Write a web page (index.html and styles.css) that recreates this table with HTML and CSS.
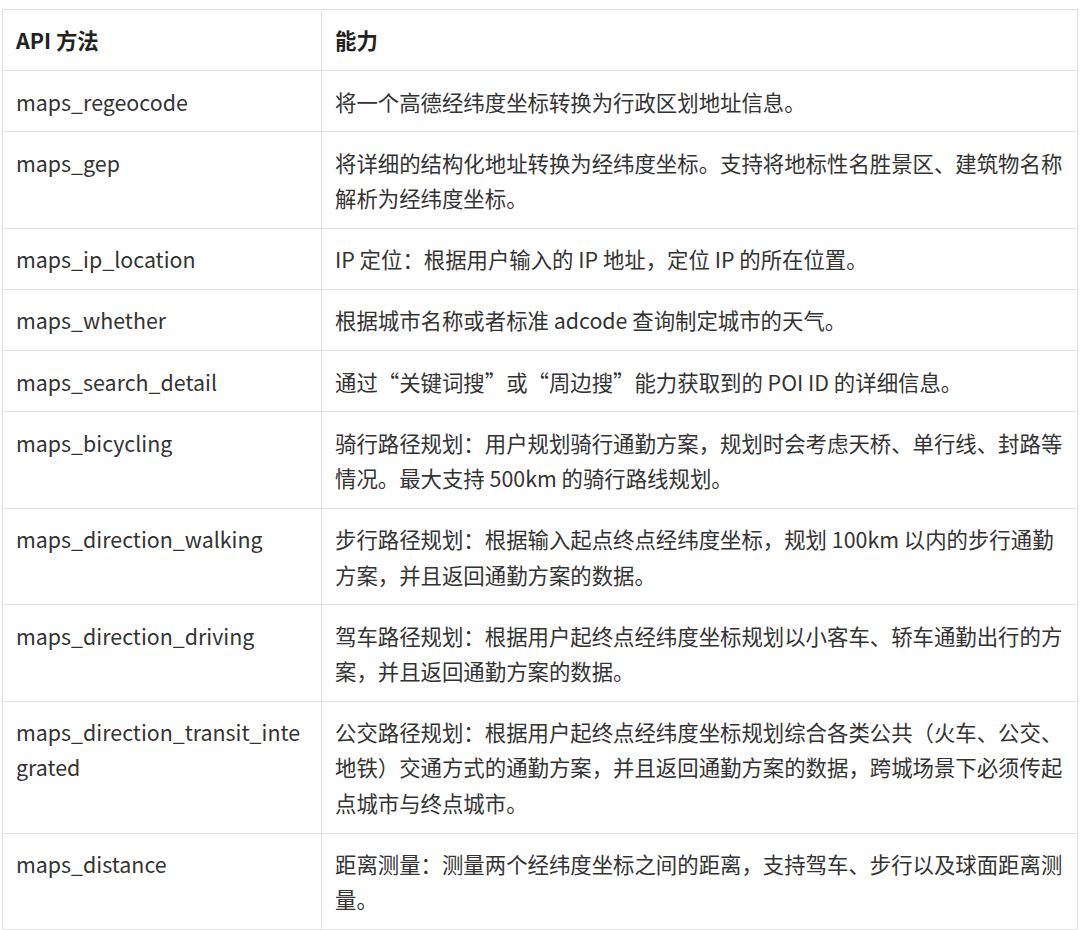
FILE: index.html
```html
<!DOCTYPE html>
<html lang="zh-CN">
<head>
<meta charset="utf-8">
<link rel="stylesheet" href="styles.css">
</head>
<body>
<table class="api-table">
  <colgroup><col class="col-name"><col class="col-desc"></colgroup>
  <thead>
    <tr><th>API 方法</th><th>能力</th></tr>
  </thead>
  <tbody>
    <tr><td>maps_regeocode</td><td>将一个高德经纬度坐标转换为行政区划地址信息。</td></tr>
    <tr><td>maps_gep</td><td>将详细的结构化地址转换为经纬度坐标。支持将地标性名胜景区、建筑物名称解析为经纬度坐标。</td></tr>
    <tr><td>maps_ip_location</td><td>IP 定位：根据用户输入的 IP 地址，定位 IP 的所在位置。</td></tr>
    <tr><td>maps_whether</td><td>根据城市名称或者标准 adcode 查询制定城市的天气。</td></tr>
    <tr><td>maps_search_detail</td><td>通过“关键词搜”或“周边搜”能力获取到的 POI ID 的详细信息。</td></tr>
    <tr><td>maps_bicycling</td><td>骑行路径规划：用户规划骑行通勤方案，规划时会考虑天桥、单行线、封路等情况。最大支持 500km 的骑行路线规划。</td></tr>
    <tr><td>maps_direction_walking</td><td>步行路径规划：根据输入起点终点经纬度坐标，规划 100km 以内的步行通勤方案，并且返回通勤方案的数据。</td></tr>
    <tr><td>maps_direction_driving</td><td>驾车路径规划：根据用户起终点经纬度坐标规划以小客车、轿车通勤出行的方案，并且返回通勤方案的数据。</td></tr>
    <tr><td>maps_direction_transit_integrated</td><td>公交路径规划：根据用户起终点经纬度坐标规划综合各类公共（火车、公交、地铁）交通方式的通勤方案，并且返回通勤方案的数据，跨城场景下必须传起点城市与终点城市。</td></tr>
    <tr><td>maps_distance</td><td>距离测量：测量两个经纬度坐标之间的距离，支持驾车、步行以及球面距离测量。</td></tr>
  </tbody>
</table>
</body>
</html>
```

FILE: styles.css
```css
html, body {
  margin: 0;
  padding: 0;
  background: #ffffff;
}
body {
  padding: 9px 0 0 2px;
  font-family: "Noto Sans CJK SC", "Noto Sans", sans-serif;
  color: #333333;
}
.api-table {
  border-collapse: collapse;
  table-layout: fixed;
  width: 1076px;
  font-size: 21.4px;
  line-height: 35.3px;
}
.col-name { width: 319px; }
.api-table th,
.api-table td {
  border: 1px solid #e1e1e1;
  padding: 12.45px 13px;
  text-align: left;
  vertical-align: top;
  overflow-wrap: anywhere;
}
.api-table th {
  font-weight: 700;
  color: #222222;
}
```
